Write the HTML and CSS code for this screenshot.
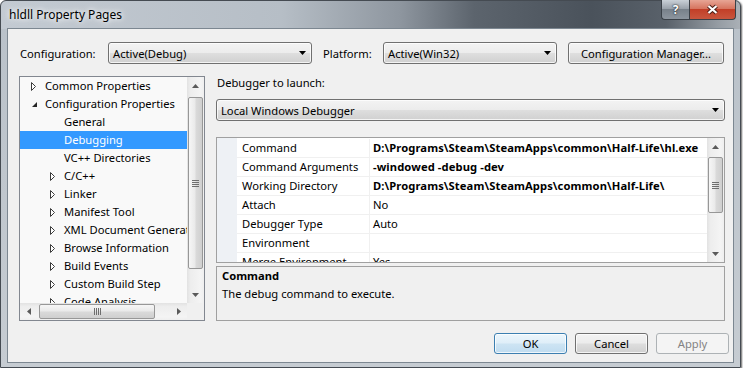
FILE: index.html
```html
<!DOCTYPE html>
<html lang="en">
<head>
<meta charset="UTF-8">
<meta name="viewport" content="width=device-width, initial-scale=1.0">
<title>hldll Property Pages</title>
<link rel="stylesheet" href="styles.css">
</head>
<body>
<div class="window">
    <div class="titlebar">
        <span class="title">hldll Property Pages</span>
        <div class="caption">
            <span class="cap-btn cap-help">?</span>
            <span class="cap-btn cap-close">
                <svg width="13" height="11" viewBox="0 0 13 11">
                    <path d="M2.5 2 L10.5 9 M10.5 2 L2.5 9" stroke="#4a1e16" stroke-width="4.2"/>
                    <path d="M2.5 2 L10.5 9 M10.5 2 L2.5 9" stroke="#ffffff" stroke-width="2.2"/>
                </svg>
            </span>
        </div>
    </div>

    <div class="client">
        <div class="config-row">
            <span class="lbl lbl-config">Configuration:</span>
            <div class="combo combo-config">
                <span class="combo-text">Active(Debug)</span>
                <span class="combo-arrow"><svg width="7" height="4" viewBox="0 0 7 4"><polygon points="0,0 7,0 3.5,4" fill="#000"/></svg></span>
            </div>
            <span class="lbl lbl-platform">Platform:</span>
            <div class="combo combo-platform">
                <span class="combo-text">Active(Win32)</span>
                <span class="combo-arrow"><svg width="7" height="4" viewBox="0 0 7 4"><polygon points="0,0 7,0 3.5,4" fill="#000"/></svg></span>
            </div>
            <button class="btn btn-manager">Configuration Manager...</button>
        </div>

        <div class="main">
            <!-- left tree -->
            <div class="tree">
                <div class="tree-top">
                    <ul class="tree-list">
                        <li class="node lv1"><span class="exp"><svg width="6" height="9" viewBox="0 0 6 9"><polygon points="0.5,0.5 4.5,4.5 0.5,8.5" fill="#fff" stroke="#3c3c3c"/></svg></span>Common Properties</li>
                        <li class="node lv1"><span class="exp"><svg width="6" height="9" viewBox="0 0 6 9"><polygon points="6,2 6,7 1,7" fill="#262626"/></svg></span>Configuration Properties</li>
                        <li class="node lv2"><span class="exp"></span>General</li>
                        <li class="node lv2 selected"><span class="exp"></span>Debugging</li>
                        <li class="node lv2"><span class="exp"></span>VC++ Directories</li>
                        <li class="node lv2"><span class="exp"><svg width="6" height="9" viewBox="0 0 6 9"><polygon points="0.5,0.5 4.5,4.5 0.5,8.5" fill="#fff" stroke="#3c3c3c"/></svg></span>C/C++</li>
                        <li class="node lv2"><span class="exp"><svg width="6" height="9" viewBox="0 0 6 9"><polygon points="0.5,0.5 4.5,4.5 0.5,8.5" fill="#fff" stroke="#3c3c3c"/></svg></span>Linker</li>
                        <li class="node lv2"><span class="exp"><svg width="6" height="9" viewBox="0 0 6 9"><polygon points="0.5,0.5 4.5,4.5 0.5,8.5" fill="#fff" stroke="#3c3c3c"/></svg></span>Manifest Tool</li>
                        <li class="node lv2"><span class="exp"><svg width="6" height="9" viewBox="0 0 6 9"><polygon points="0.5,0.5 4.5,4.5 0.5,8.5" fill="#fff" stroke="#3c3c3c"/></svg></span>XML Document Generator</li>
                        <li class="node lv2"><span class="exp"><svg width="6" height="9" viewBox="0 0 6 9"><polygon points="0.5,0.5 4.5,4.5 0.5,8.5" fill="#fff" stroke="#3c3c3c"/></svg></span>Browse Information</li>
                        <li class="node lv2"><span class="exp"><svg width="6" height="9" viewBox="0 0 6 9"><polygon points="0.5,0.5 4.5,4.5 0.5,8.5" fill="#fff" stroke="#3c3c3c"/></svg></span>Build Events</li>
                        <li class="node lv2"><span class="exp"><svg width="6" height="9" viewBox="0 0 6 9"><polygon points="0.5,0.5 4.5,4.5 0.5,8.5" fill="#fff" stroke="#3c3c3c"/></svg></span>Custom Build Step</li>
                        <li class="node lv2"><span class="exp"><svg width="6" height="9" viewBox="0 0 6 9"><polygon points="0.5,0.5 4.5,4.5 0.5,8.5" fill="#fff" stroke="#3c3c3c"/></svg></span>Code Analysis</li>
                    </ul>
                    <div class="vscroll">
                        <span class="sb-arrow"><svg width="7" height="4" viewBox="0 0 7 4"><polygon points="0,4 3.5,0 7,4" fill="#5a5a5a"/></svg></span>
                        <div class="sb-track"><div class="sb-thumb thumb-tree"><span class="grip-v"></span></div></div>
                        <span class="sb-arrow"><svg width="7" height="4" viewBox="0 0 7 4"><polygon points="0,0 7,0 3.5,4" fill="#5a5a5a"/></svg></span>
                    </div>
                </div>
                <div class="tree-bottom">
                    <div class="hscroll">
                        <span class="sb-arrow"><svg width="4" height="7" viewBox="0 0 4 7"><polygon points="4,0 4,7 0,3.5" fill="#5a5a5a"/></svg></span>
                        <div class="sb-track"><div class="sb-thumb-h"><span class="grip-h"></span></div></div>
                        <span class="sb-arrow"><svg width="4" height="7" viewBox="0 0 4 7"><polygon points="0,0 4,3.5 0,7" fill="#5a5a5a"/></svg></span>
                    </div>
                    <div class="sb-corner"></div>
                </div>
            </div>

            <!-- right pane -->
            <div class="pane">
                <div class="pane-label">Debugger to launch:</div>
                <div class="combo combo-debugger">
                    <span class="combo-text">Local Windows Debugger</span>
                    <span class="combo-arrow"><svg width="7" height="4" viewBox="0 0 7 4"><polygon points="0,0 7,0 3.5,4" fill="#000"/></svg></span>
                </div>

                <div class="grid">
                    <div class="grid-rows">
                        <div class="prop-row"><span class="prop-name">Command</span><span class="prop-value changed">D:\Programs\Steam\SteamApps\common\Half-Life\hl.exe</span></div>
                        <div class="prop-row"><span class="prop-name">Command Arguments</span><span class="prop-value changed">-windowed -debug -dev</span></div>
                        <div class="prop-row"><span class="prop-name">Working Directory</span><span class="prop-value changed">D:\Programs\Steam\SteamApps\common\Half-Life\</span></div>
                        <div class="prop-row"><span class="prop-name">Attach</span><span class="prop-value">No</span></div>
                        <div class="prop-row"><span class="prop-name">Debugger Type</span><span class="prop-value">Auto</span></div>
                        <div class="prop-row"><span class="prop-name">Environment</span><span class="prop-value"></span></div>
                        <div class="prop-row"><span class="prop-name">Merge Environment</span><span class="prop-value">Yes</span></div>
                    </div>
                    <div class="vscroll">
                        <span class="sb-arrow"><svg width="7" height="4" viewBox="0 0 7 4"><polygon points="0,4 3.5,0 7,4" fill="#5a5a5a"/></svg></span>
                        <div class="sb-track"><div class="sb-thumb thumb-grid"><span class="grip-v"></span></div></div>
                        <span class="sb-arrow"><svg width="7" height="4" viewBox="0 0 7 4"><polygon points="0,0 7,0 3.5,4" fill="#5a5a5a"/></svg></span>
                    </div>
                </div>

                <div class="desc">
                    <div class="desc-title">Command</div>
                    <div>The debug command to execute.</div>
                </div>
            </div>
        </div>

        <div class="buttons">
            <button class="btn dlg-btn btn-ok">OK</button>
            <button class="btn dlg-btn">Cancel</button>
            <button class="btn dlg-btn btn-disabled">Apply</button>
        </div>
    </div>
</div>
</body>
</html>
```

FILE: styles.css
```css
* {
    box-sizing: border-box;
}

html, body {
    margin: 0;
    padding: 0;
}

body {
    background: #ffffff;
    font-family: "Noto Sans", "Open Sans", sans-serif;
    font-size: 11.2px;
    color: #000;
}

/* window frame */
.window {
    width: 741px;
    height: 368px;
    border: 1px solid #454b52;
    border-radius: 6px 6px 0 0;
    padding: 0 6px 4px 6px;
    display: flex;
    flex-direction: column;
    background:
        linear-gradient(to right, #c3cad2 0%, #b6bec6 38%, #8e969f 54%, #5c646d 64%, #4a525b 80%, #59616a 90%, #959ca3 97%, #aab0b6 100%) top left / 100% 28px no-repeat,
        linear-gradient(to bottom, #b9c1c9, #c6ccd2);
    box-shadow: 1px 1px 2px rgba(0, 0, 0, .6);
}

.titlebar {
    height: 27px;
    display: flex;
    justify-content: space-between;
    align-items: flex-start;
}

.title {
    padding: 6px 0 0 2px;
    line-height: 16px;
    font-size: 12px;
    text-shadow: 0 0 5px #fff, 0 0 9px rgba(255, 255, 255, .9);
}

.caption {
    display: flex;
    margin: -1px -2px 0 0;
}

.cap-btn {
    height: 20px;
    display: flex;
    align-items: center;
    justify-content: center;
    border: 1px solid #3a4047;
    border-top: none;
}

.cap-help {
    width: 28px;
    border-right: none;
    border-radius: 0 0 0 4px;
    background: linear-gradient(#c9d0d7 0%, #9aa2ab 45%, #78818a 50%, #8d959e 100%);
    color: #fff;
    font-weight: bold;
    font-size: 12px;
    text-shadow: 0 0 2px #1c2024, 0 0 1px #1c2024;
}

.cap-close {
    width: 47px;
    border-radius: 0 0 4px 0;
    background: linear-gradient(#e7a595 0%, #d67560 45%, #c23f28 50%, #c8563e 100%);
}

/* client area */
.client {
    flex: 1;
    border: 1px solid #7c8791;
    background: #f0f0f0;
    padding: 13px 8px 8px 11px;
    display: flex;
    flex-direction: column;
}

.config-row {
    height: 22px;
    display: flex;
    align-items: center;
}

.lbl {
    padding-left: 1px;
}

.lbl-config {
    width: 89px;
}

.lbl-platform {
    width: 61px;
    margin-left: 10px;
}

.combo, .btn {
    height: 22px;
    border: 1px solid #707070;
    border-radius: 3px;
    background: linear-gradient(#f3f3f3 0%, #ececec 48%, #dedede 52%, #d0d0d0 100%);
    box-shadow: inset 0 0 0 1px rgba(255, 255, 255, .75);
}

.combo {
    display: flex;
    align-items: center;
    padding-left: 4px;
}

.combo-text {
    flex: 1;
    white-space: nowrap;
}

.combo-arrow {
    width: 17px;
    display: flex;
    justify-content: center;
}

.combo-config {
    width: 204px;
}

.combo-platform {
    width: 174px;
}

.btn {
    font: inherit;
    color: #000;
    padding: 0;
}

.btn-manager {
    width: 156px;
    margin-left: 11px;
}

.main {
    margin-top: 12px;
    height: 245px;
    display: flex;
}

/* tree */
.tree {
    width: 186px;
    height: 245px;
    border: 1px solid #828790;
    background: #f9f9f9;
    display: flex;
    flex-direction: column;
}

.tree-top {
    flex: 1;
    display: flex;
    min-height: 0;
}

.tree-list {
    flex: 1;
    margin: 0;
    padding: 0;
    list-style: none;
    overflow: hidden;
}

.node {
    height: 18px;
    line-height: 18px;
    display: flex;
    align-items: center;
    white-space: nowrap;
}

.lv1 {
    padding-left: 8px;
}

.lv2 {
    padding-left: 27px;
}

.exp {
    width: 17px;
    flex: none;
    display: flex;
    align-items: center;
    padding-left: 3px;
}

.node.selected {
    background: #3399ff;
    color: #fff;
}

.tree-bottom {
    height: 17px;
    display: flex;
}

.sb-corner {
    width: 17px;
    background: #f0f0f0;
}

/* scrollbars */
.vscroll {
    width: 17px;
    flex: none;
    display: flex;
    flex-direction: column;
    background: linear-gradient(to right, #e2e2e2, #ededed 20%, #f4f4f4 80%, #efefef);
}

.hscroll {
    flex: 1;
    display: flex;
    background: linear-gradient(to bottom, #e2e2e2, #ededed 20%, #f4f4f4 80%, #efefef);
}

.sb-arrow {
    width: 17px;
    height: 17px;
    flex: none;
    display: flex;
    align-items: center;
    justify-content: center;
}

.sb-track {
    flex: 1;
}

.sb-thumb {
    margin: 3px 1px 0;
    border: 1px solid #979797;
    border-radius: 2px;
    background: linear-gradient(to right, #f6f6f6, #e9e9e9 48%, #dadada 52%, #cfcfcf);
    display: flex;
    align-items: center;
    justify-content: center;
}

.thumb-tree {
    height: 172px;
}

.thumb-grid {
    height: 56px;
    margin-top: 2px;
}

.sb-thumb-h {
    width: 116px;
    height: 15px;
    margin: 1px 0 0 2px;
    border: 1px solid #979797;
    border-radius: 2px;
    background: linear-gradient(to bottom, #f6f6f6, #e9e9e9 48%, #dadada 52%, #cfcfcf);
    display: flex;
    align-items: center;
    justify-content: center;
}

.grip-v {
    width: 7px;
    height: 7px;
    background: repeating-linear-gradient(to bottom, #6e6e6e 0 1px, transparent 1px 2px);
}

.grip-h {
    width: 7px;
    height: 7px;
    background: repeating-linear-gradient(to right, #6e6e6e 0 1px, transparent 1px 2px);
}

/* right pane */
.pane {
    flex: 1;
    margin-left: 11px;
    display: flex;
    flex-direction: column;
}

.pane-label {
    height: 14px;
    line-height: 14px;
    padding-left: 1px;
}

.combo-debugger {
    margin-top: 9px;
}

.grid {
    margin-top: 16px;
    height: 126px;
    border: 1px solid #a0a0a0;
    display: flex;
    background: #fff;
}

.grid-rows {
    flex: 1;
    overflow: hidden;
    padding-top: 1px;
    background: linear-gradient(to right, #eef1f5 20px, #fff 20px);
}

.prop-row {
    display: grid;
    grid-template-columns: 132px 1fr;
    height: 19px;
    margin-left: 20px;
}

.prop-name, .prop-value {
    line-height: 18px;
    border-bottom: 1px solid #f0f0f0;
    white-space: nowrap;
    overflow: hidden;
}

.prop-name {
    padding-left: 5px;
}

.prop-value {
    border-left: 1px solid #f0f0f0;
    padding-left: 3px;
}

.prop-value.changed {
    font-weight: bold;
    letter-spacing: 0.1px;
}

.desc {
    margin-top: 3px;
    height: 55px;
    border: 1px solid #a0a0a0;
    padding-left: 5px;
    line-height: 18px;
}

.desc-title {
    font-weight: bold;
}

/* dialog buttons */
.buttons {
    margin-top: 12px;
    margin-right: -4px;
    display: flex;
    justify-content: flex-end;
    gap: 8px;
}

.dlg-btn {
    width: 73px;
    height: 21px;
}

.btn-ok {
    border-color: #3c7fb1;
    background: linear-gradient(#ecf6fc 0%, #dfeef8 48%, #cde4f3 52%, #c0dcf0 100%);
}

.btn-disabled {
    border-color: #adb2b5;
    background: #f4f4f4;
    box-shadow: none;
    color: #838383;
}
```
